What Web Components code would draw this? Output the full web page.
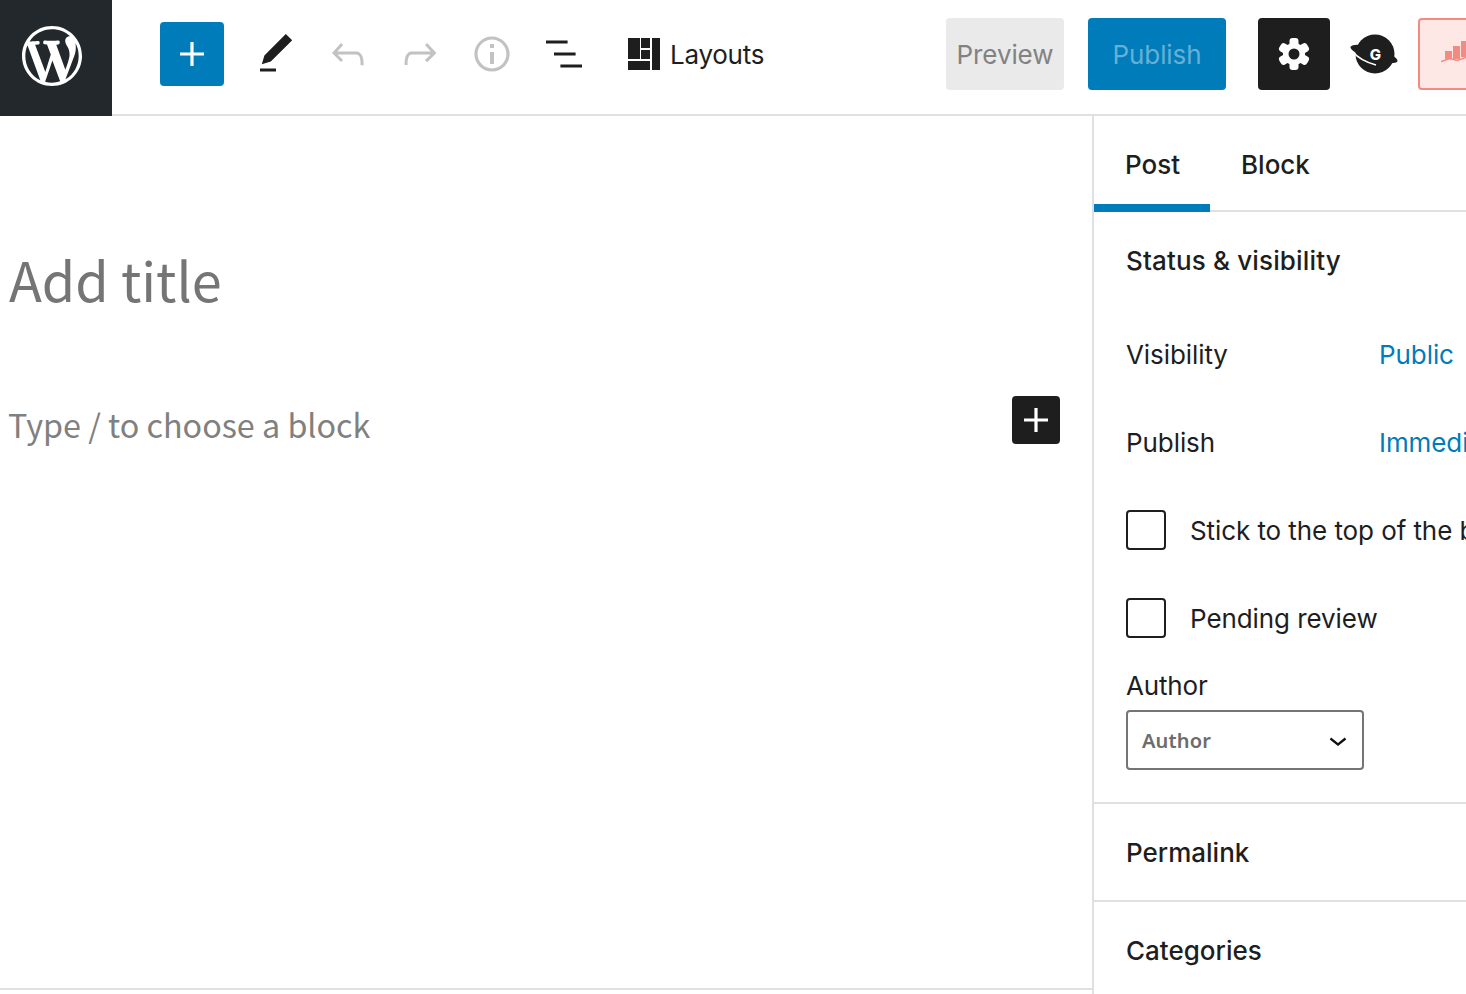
<!doctype html>
<html lang="en"><head><meta charset="utf-8"><title>Editor</title>
<style>
html,body{margin:0;height:100%;background:#fff;overflow:hidden}
body{font-family:Inter,"Liberation Sans",sans-serif;color:#1e1e1e}
</style></head><body>
<wp-app></wp-app>
<script>
const P={
wp:'M20 10c0-5.51-4.49-10-10-10C4.48 0 0 4.49 0 10c0 5.52 4.48 10 10 10 5.51 0 10-4.48 10-10zM7.78 15.37L4.37 6.22c.55-.02 1.17-.08 1.17-.08.5-.06.44-1.13-.06-1.11 0 0-1.45.11-2.37.11-.18 0-.37 0-.58-.01C4.12 2.69 6.87 1.11 10 1.11c2.33 0 4.45.87 6.05 2.34-.68-.11-1.65.39-1.65 1.58 0 .74.45 1.36.9 2.1.35.61.55 1.36.55 2.46 0 1.49-1.4 5-1.4 5l-3.03-8.37c.54-.02.82-.17.82-.17.5-.05.44-1.25-.06-1.22 0 0-1.44.12-2.38.12-.87 0-2.33-.12-2.33-.12-.5-.03-.56 1.2-.06 1.22l.92.08 1.26 3.41zM17.41 10c.24-.64.74-1.87.43-4.25.7 1.29 1.05 2.71 1.05 4.25 0 3.29-1.73 6.24-4.4 7.78.97-2.59 1.94-5.2 2.92-7.78zM6.1 18.09C3.12 16.65 1.11 13.53 1.11 10c0-1.3.23-2.48.72-3.59C3.25 10.3 4.67 14.2 6.1 18.09zm4.03-6.63l2.58 6.98c-.86.29-1.76.45-2.71.45-.79 0-1.57-.11-2.29-.33.81-2.38 1.62-4.74 2.42-7.1z',
plus:'M18 11.2h-5.2V6h-1.6v5.2H6v1.6h5.2V18h1.6v-5.2H18z',
edit:'M20.1 5.1L16.9 2 6.2 12.7l-1.3 4.4 4.5-1.3L20.1 5.1zM4 20.8h8v-1.5H4v1.5z',
undo:'M18.3 11.7c-.6-.6-1.4-.9-2.3-.9H6.7l2.9-3.3-1.1-1-4.5 5L8.5 16l1-1-2.7-2.7H16c.5 0 .9.2 1.3.5 1 1 1 3.4 1 4.5v.3h1.5v-.2c0-1.5 0-4.3-1.5-5.7z',
redo:'M15.6 6.5l-1.1 1 2.9 3.3H8c-.9 0-1.7.3-2.3.9-1.4 1.5-1.4 4.2-1.4 5.6v.2h1.5v-.3c0-1.1 0-3.5 1-4.5.3-.3.7-.5 1.3-.5h9.2L14.5 15l1.1 1.1 4.6-4.6-4.6-5z',
info:'M12 3.2c-4.8 0-8.8 3.9-8.8 8.8 0 4.8 3.9 8.8 8.8 8.8 4.8 0 8.8-3.9 8.8-8.8 0-4.8-4-8.8-8.8-8.8zm0 16c-4 0-7.2-3.3-7.2-7.2C4.8 8 8 4.8 12 4.8s7.2 3.3 7.2 7.2c0 4-3.2 7.2-7.2 7.2zM11 17h2v-6h-2v6zm0-8h2V7h-2v2z',
list:'M3 5.2h10.8v1.5H3zM7 11.2h10.8v1.5H7zM10.2 17.2H21v1.5H10.2z',
chev:'M17.5 11.6L12 16l-5.5-4.4.9-1.2L12 14l4.5-3.6 1 1.2z'
};
function def(name,html){customElements.define(name,class extends HTMLElement{
  constructor(){super();this.attachShadow({mode:'open'}).innerHTML=typeof html==='function'?html(this):html}
})}
def('wp-icon',el=>{const n=el.getAttribute('name'),s=el.getAttribute('size')||48,c=el.getAttribute('color')||'currentColor',vb=el.getAttribute('vb')||24;
 return `<style>:host{display:block;width:${s}px;height:${s}px;flex:none}svg{display:block}</style><svg width="${s}" height="${s}" viewBox="0 0 ${vb} ${vb}" fill="${c}"><path d="${P[n]}"/></svg>`});

def('wp-header',`<style>
:host{display:flex;align-items:center;height:116px;box-shadow:inset 0 -2px 0 #e0e0e0;overflow:hidden;flex:none;font-size:26px}
.logo{width:112px;height:116px;box-sizing:border-box;padding:26px 30px 30px 22px;background:#23282d;flex:none;color:#fff}
.ins{width:64px;height:64px;margin:-8px 28px 0 48px;background:#007cba;border-radius:4px;display:flex;align-items:center;justify-content:center;color:#fff;flex:none}
.tools{display:flex;gap:24px;margin-top:-8px;flex:none}
.off{color:#c2c2c2}
.lay{display:flex;align-items:center;margin-left:40px;gap:10px;flex:none;margin-top:-8px;letter-spacing:-.25px}
.lay svg{display:block}
.sp{flex:1;min-width:0}
.btns{display:flex;align-items:center;flex:none;margin-top:-8px;margin-right:-24px}
.b{height:72px;box-sizing:border-box;border-radius:4px;display:flex;align-items:center;justify-content:center;flex:none;font-size:26px;letter-spacing:-.1px}
.prev{width:118px;background:#eaeaea;color:#828282}
.pub{width:138px;margin-left:24px;background:#007cba;color:#66b0d6}
.set{width:72px;margin-left:32px;background:#1e1e1e}
.gl{margin:0 20px;display:block;flex:none}
.red{width:72px;border:2px solid #f28b82;background:#fde8e6;justify-content:flex-start;padding-left:21px}
</style>
<div class="logo"><wp-icon name="wp" size="60" vb="20"></wp-icon></div>
<div class="ins"><wp-icon name="plus"></wp-icon></div>
<div class="tools"><wp-icon name="edit"></wp-icon><wp-icon class="off" name="undo"></wp-icon><wp-icon class="off" name="redo"></wp-icon><wp-icon class="off" name="info"></wp-icon><wp-icon name="list"></wp-icon></div>
<div class="lay"><svg width="32" height="32" viewBox="0 0 32 32" fill="#1e1e1e"><path d="M0 0h12v21H0zM13 0h9v10h-9zM13 12h9v9h-9zM0 23h22v9H0zM24 0h8v32h-8z"/></svg><span>Layouts</span></div>
<div class="sp"></div>
<div class="btns">
<div class="b prev">Preview</div>
<div class="b pub">Publish</div>
<div class="b set"><svg width="34" height="34" viewBox="-17 -17 34 34" fill="#fff"><circle r="11"/><rect x="-4.500" y="-16" width="9" height="10" rx="3"/><rect x="-4.500" y="-16" width="9" height="10" rx="3" transform="rotate(60)"/><rect x="-4.500" y="-16" width="9" height="10" rx="3" transform="rotate(120)"/><rect x="-4.500" y="-16" width="9" height="10" rx="3" transform="rotate(180)"/><rect x="-4.500" y="-16" width="9" height="10" rx="3" transform="rotate(240)"/><rect x="-4.500" y="-16" width="9" height="10" rx="3" transform="rotate(300)"/><circle r="5.500" fill="#1e1e1e"/></svg></div>
<svg class="gl" width="48" height="48" viewBox="0 0 48 48"><ellipse cx="24" cy="24" rx="24.500" ry="6" transform="rotate(17 24 24)" fill="#1e1e1e"/><circle cx="25" cy="24" r="19.500" fill="#1e1e1e"/><path d="M3 22c5 6 12 10 23 13" fill="none" stroke="#fff" stroke-width="1.500"/><text x="25.500" y="29.500" text-anchor="middle" font-family="Inter,sans-serif" font-size="15" font-weight="800" fill="#fff">G</text></svg>
<div class="b red"><svg width="34" height="26" viewBox="0 0 34 26" fill="#f28b82"><path d="M4 10h7v8H4zM12 5h7v13h-7zM20 0h7v16h-7z"/><path d="M0 20.500l9-3 7 2 9-3 9 3" fill="none" stroke="#f28b82" stroke-width="1.600"/></svg></div>
</div>`);

def('wp-editor',`<style>
:host{display:block;flex:1;min-width:0;height:872px;border-bottom:2px solid #e0e0e0;font-family:"Noto Sans CJK SC","Noto Sans",sans-serif}
h1{margin:0;padding:127px 0 0 9px;font-size:54px;font-weight:400;line-height:72px;color:#757575}
.row{display:flex;align-items:flex-start;justify-content:space-between;margin-top:81px;padding:0 32px 0 8px}
.ph{font-size:32.3px;color:#808080;line-height:48px;margin-top:4px}
.add{width:48px;height:48px;background:#1e1e1e;border-radius:4px;color:#fff;display:flex;align-items:center;justify-content:center}
</style>
<h1>Add title</h1>
<div class="row"><span class="ph">Type / to choose a block</span><div class="add"><wp-icon name="plus"></wp-icon></div></div>`);

def('wp-row',`<style>
:host{display:flex;align-items:center;height:88px;white-space:nowrap;font-size:26px;letter-spacing:-.08px}
.l{width:253px;flex:none}.v{color:#007cba}
</style><span class="l"><slot name="label"></slot></span><span class="v"><slot></slot></span>`);

def('wp-check',`<style>
:host{display:flex;align-items:center;height:88px;white-space:nowrap;font-size:26px;letter-spacing:-.08px;gap:24px}
i{display:block;width:40px;height:40px;box-sizing:border-box;border:2px solid #1e1e1e;border-radius:4px;flex:none}
</style><i></i><span><slot></slot></span>`);

def('wp-panel',`<style>
:host{display:block;border-bottom:2px solid #e0e0e0;padding:0 0 0 32px;font-size:26px}
.h{display:flex;align-items:center;height:96px;font-weight:500}
</style><div class="h"><slot name="title"></slot></div><slot></slot>`);

def('wp-select',`<style>
:host{display:flex;align-items:center;justify-content:space-between;width:238px;height:60px;box-sizing:border-box;border:2px solid #757575;border-radius:4px;padding:0 6px 0 14px;font-family:"Noto Sans","Noto Sans CJK SC",sans-serif;font-size:20px;font-weight:600;letter-spacing:.15px;color:#6c6c6c}
</style><span><slot></slot></span><wp-icon name="chev" size="36" color="#111"></wp-icon>`);

def('wp-sidebar',`<style>
:host{display:block;flex:none;width:372px;height:878px;border-left:2px solid #e0e0e0;overflow:hidden;font-size:26px}
.tabs{display:flex;height:96px;box-sizing:border-box;border-bottom:2px solid #e0e0e0;white-space:nowrap}
.t{display:flex;align-items:center;box-sizing:border-box;height:96px;padding:0 31px;font-size:26px;font-weight:450;flex:none}
.t.a{width:116px;padding:0 0 0 31px;box-shadow:inset 0 -8px 0 #007cba}
.s{letter-spacing:.15px}
.gap{margin-top:2px}
.auth{line-height:48px;height:48px;letter-spacing:-.15px}
.sel{padding-bottom:32px}
</style>
<div class="tabs"><div class="t a">Post</div><div class="t">Block</div></div>
<wp-panel><span slot="title" class="s">Status &amp; visibility</span>
<wp-row class="gap"><span slot="label">Visibility</span>Public</wp-row>
<wp-row><span slot="label">Publish</span>Immediately</wp-row>
<wp-check>Stick to the top of the blog</wp-check>
<wp-check>Pending review</wp-check>
<div class="auth">Author</div>
<div class="sel"><wp-select>Author</wp-select></div>
</wp-panel>
<wp-panel><span slot="title">Permalink</span></wp-panel>
<wp-panel><span slot="title">Categories</span></wp-panel>`);

def('wp-app',`<style>
:host{display:flex;flex-direction:column;width:1466px;height:994px;overflow:hidden}
.m{display:flex;flex:1;min-height:0;align-items:flex-start}
</style><wp-header></wp-header><div class="m"><wp-editor></wp-editor><wp-sidebar></wp-sidebar></div>`);
</script>
</body></html>
